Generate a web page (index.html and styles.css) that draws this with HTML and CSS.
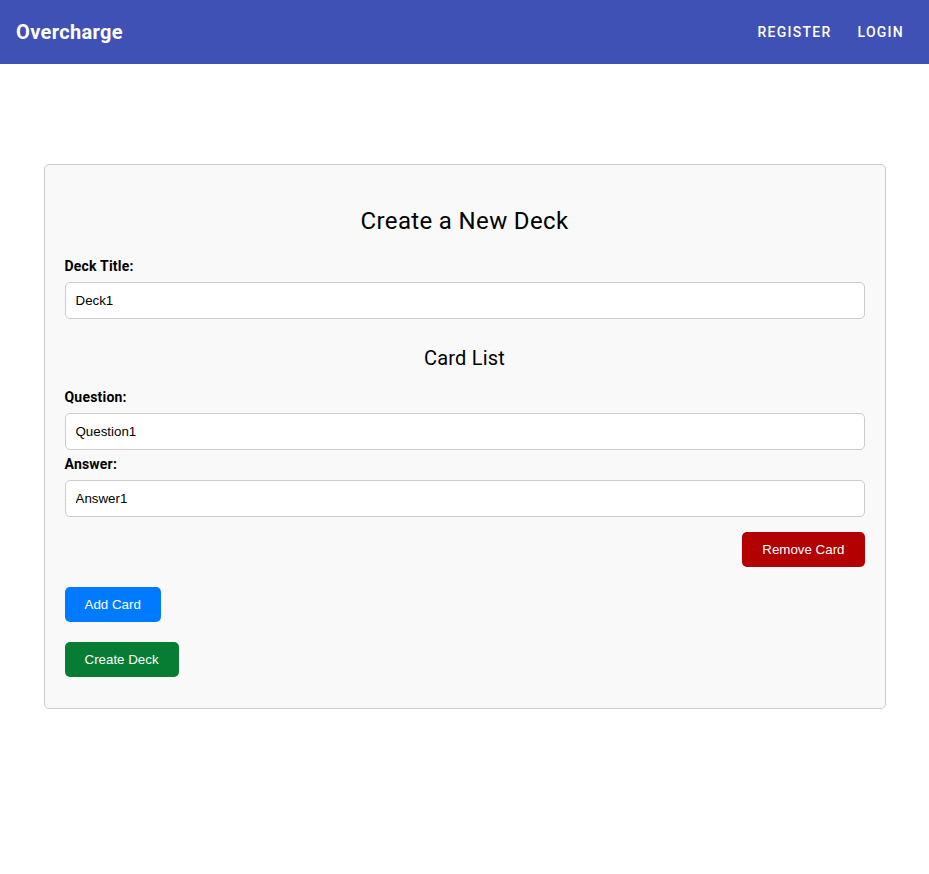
FILE: index.html
```html
<!DOCTYPE html>
<html lang="en">
<head>
<meta charset="utf-8">
<title>Overcharge</title>
<link rel="stylesheet" href="styles.css">
</head>
<body>
<header class="appbar">
  <div class="brand">Overcharge</div>
  <nav class="nav">
    <a class="nav-btn" href="#">Register</a>
    <a class="nav-btn" href="#">Login</a>
  </nav>
</header>
<main class="deck-card">
  <h2 class="deck-heading">Create a New Deck</h2>
  <label class="field-label" for="title">Deck Title:</label>
  <input class="field-input" id="title" type="text" value="Deck1">
  <h3 class="list-heading">Card List</h3>
  <div class="card-item">
    <label class="field-label" for="q1">Question:</label>
    <input class="field-input" id="q1" type="text" value="Question1">
    <label class="field-label answer-label" for="a1">Answer:</label>
    <input class="field-input" id="a1" type="text" value="Answer1">
    <div class="remove-row">
      <button class="btn btn-remove" type="button">Remove Card</button>
    </div>
  </div>
  <div class="action-row">
    <button class="btn btn-add" type="button">Add Card</button>
  </div>
  <div class="action-row">
    <button class="btn btn-create" type="button">Create Deck</button>
  </div>
</main>
</body>
</html>
```
FILE: styles.css
```css
* { box-sizing: border-box; }
body {
  margin: 0;
  background: #fff;
  font-family: Roboto, "Liberation Sans", Arial, sans-serif;
  color: #000;
}
.appbar {
  height: 64px;
  background: #3f51b5;
  color: #fff;
  display: flex;
  align-items: center;
  justify-content: space-between;
  padding: 0 17px 0 16px;
}
.brand {
  font-size: 20px;
  font-weight: 700;
  letter-spacing: 0.35px;
}
.nav { display: flex; gap: 10px; }
.nav-btn {
  color: #fff;
  text-decoration: none;
  text-transform: uppercase;
  font-size: 14px;
  font-weight: 500;
  letter-spacing: 0.09em;
  padding: 6px 8px;
  line-height: 24px;
}
.deck-card {
  width: 842px;
  margin: 100px auto;
  padding: 20px 20px 31px;
  background: #f9f9f9;
  border: 1px solid #ccc;
  border-radius: 5px;
}
.deck-heading {
  margin: 22px 0 23px;
  font-size: 24px;
  font-weight: 400;
  line-height: 28px;
  letter-spacing: 0.35px;
  text-align: center;
}
.field-label {
  display: block;
  font-size: 14px;
  font-weight: 700;
  line-height: 16px;
  letter-spacing: 0.2px;
  margin-bottom: 8px;
}
.answer-label { margin-top: 6px; }
.field-input {
  display: block;
  width: 100%;
  height: 37px;
  padding: 10px;
  border: 1px solid #ccc;
  border-radius: 5px;
  background: #fff;
  font-family: "Liberation Sans", Arial, sans-serif;
  font-size: 13.333px;
  color: #000;
}
.list-heading {
  margin: 28px 0 19px;
  font-size: 20px;
  font-weight: 400;
  line-height: 23px;
  letter-spacing: 0.2px;
  text-align: center;
}
.remove-row {
  display: flex;
  justify-content: flex-end;
  margin-top: 15px;
}
.action-row { margin-top: 20px; }
.btn {
  height: 35px;
  padding: 0 20px;
  border: none;
  border-radius: 5px;
  color: #fff;
  font-family: "Liberation Sans", Arial, sans-serif;
  font-size: 13.333px;
  cursor: pointer;
}
.btn-remove { background: #b30000; }
.btn-add { background: #007bff; }
.btn-create { background: #077d33; }
```
